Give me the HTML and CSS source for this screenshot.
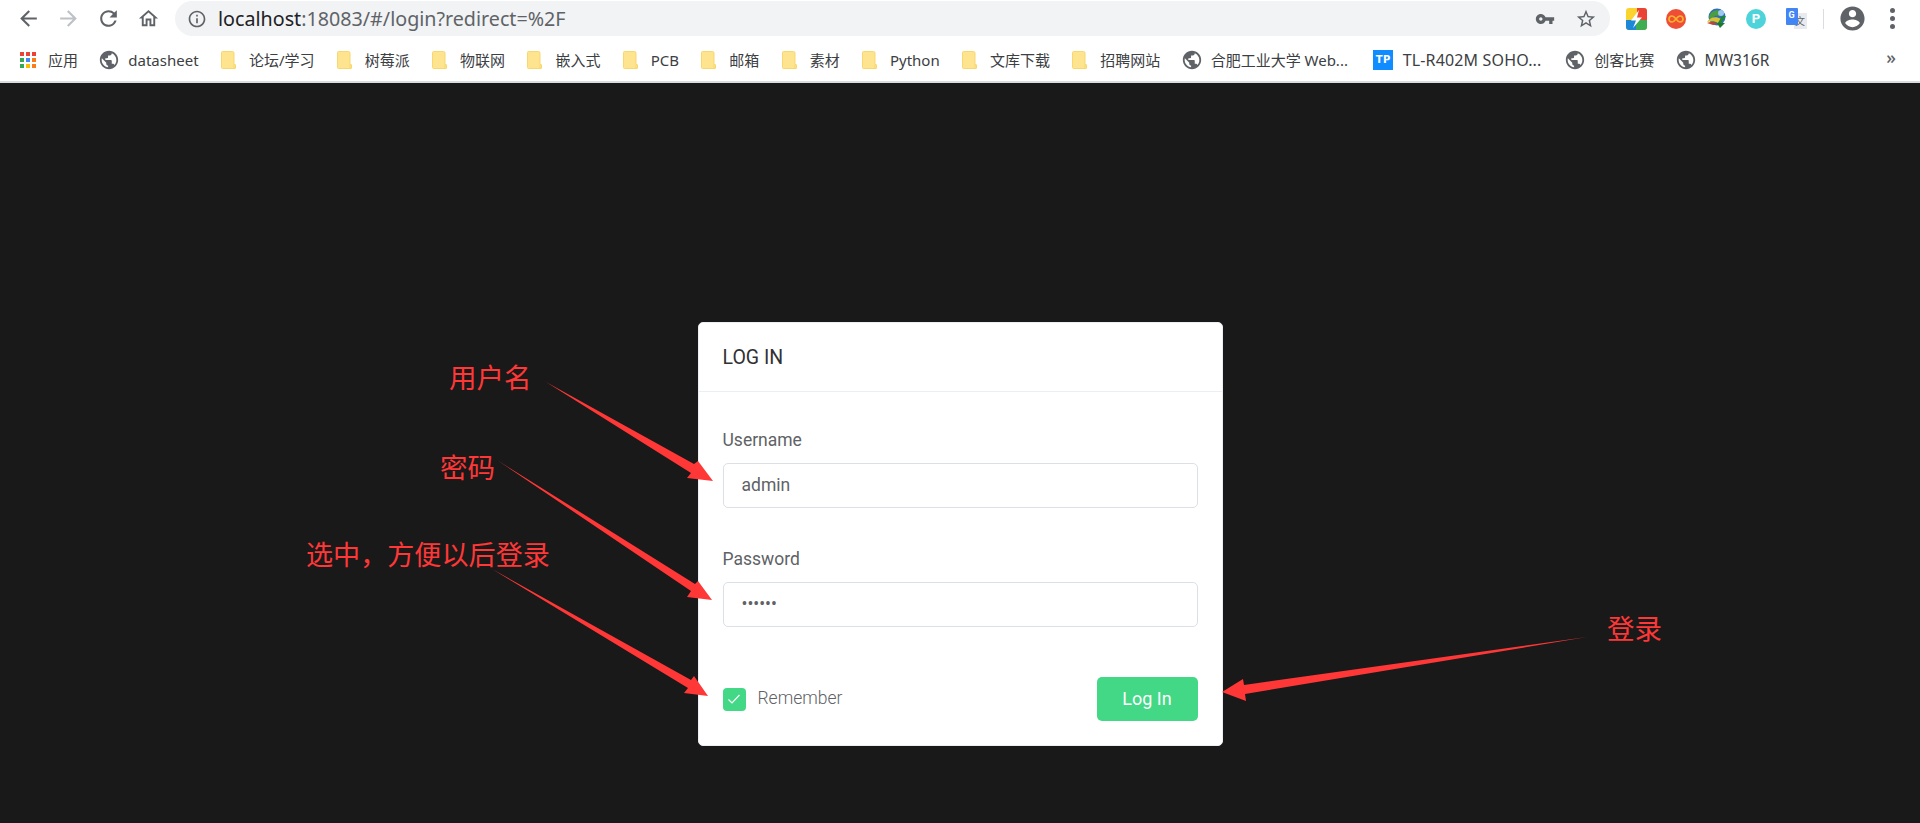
FILE: index.html
```html
<!DOCTYPE html>
<html lang="en">
<head>
    <meta charset="UTF-8">
    <title>Dashboard</title>
    <link rel="stylesheet" href="styles.css">
</head>
<body>
    <!-- shared icons -->
    <svg class="defs" width="0" height="0">
        <symbol id="globe" viewBox="0 0 24 24"><path d="M12 2C6.48 2 2 6.48 2 12s4.48 10 10 10 10-4.48 10-10S17.52 2 12 2zm-1 17.93c-3.95-.49-7-3.85-7-7.93 0-.62.08-1.21.21-1.79L9 15v1c0 1.1.9 2 2 2v1.93zm6.9-2.54c-.26-.81-1-1.39-1.9-1.39h-1v-3c0-.55-.45-1-1-1H8v-2h2c.55 0 1-.45 1-1V7h2c1.1 0 2-.9 2-2v-.41c2.93 1.19 5 4.06 5 7.41 0 2.08-.8 3.97-2.1 5.39z"/></symbol>
        <symbol id="folder" viewBox="0 0 15 18"><path d="M1.5.5h10a1.500 1.500 0 0 1 1.500 1.500v11.500h1a.5.5 0 0 1 .5.5v3a.5.5 0 0 1-.5.5H1.500a1 1 0 0 1-1-1V1.500a1 1 0 0 1 1-1z" fill="#fee48f" stroke="#f8d76e"/><path d="M13 14v3.500" stroke="#f8d76e" fill="none"/></symbol>
    </svg>

    <header class="chrome">
        <div class="toolbar">
            <button class="nav-btn"><svg class="icon-nav" viewBox="0 0 24 24"><path d="M20 11H7.830l5.590-5.590L12 4l-8 8 8 8 1.410-1.410L7.830 13H20v-2z"/></svg></button>
            <button class="nav-btn nav-off"><svg class="icon-nav" viewBox="0 0 24 24"><path d="M4 11h12.170l-5.590-5.590L12 4l8 8-8 8-1.410-1.410L16.170 13H4v-2z"/></svg></button>
            <button class="nav-btn"><svg class="icon-nav" viewBox="0 0 24 24"><path d="M17.650 6.350A7.958 7.958 0 0 0 12 4c-4.420 0-7.990 3.580-7.990 8s3.570 8 7.990 8c3.730 0 6.840-2.550 7.730-6h-2.080A5.990 5.990 0 0 1 12 18c-3.310 0-6-2.690-6-6s2.690-6 6-6c1.660 0 3.140.69 4.220 1.780L13 11h7V4l-2.350 2.350z"/></svg></button>
            <button class="nav-btn"><svg class="icon-home" viewBox="0 0 24 24"><path d="M12 5.690l5 4.500V18h-2v-6H9v6H7v-7.810l5-4.500M12 3L2 12h3v8h6v-6h2v6h6v-8h3L12 3z"/></svg></button>

            <div class="omnibox">
                <svg class="icon-info" viewBox="0 0 24 24"><path d="M11 7h2v2h-2zm0 4h2v6h-2zm1-9C6.480 2 2 6.480 2 12s4.480 10 10 10 10-4.480 10-10S17.520 2 12 2zm0 18c-4.410 0-8-3.590-8-8s3.590-8 8-8 8 3.590 8 8-3.590 8-8 8z"/></svg>
                <span class="url"><span class="url-host">localhost</span>:18083/#/login?redirect=%2F</span>
                <svg class="icon-key" viewBox="0 0 24 24"><path d="M12.650 10C11.830 7.670 9.610 6 7 6c-3.310 0-6 2.690-6 6s2.690 6 6 6c2.610 0 4.830-1.670 5.650-4H17v4h4v-4h2v-4H12.650zM7 14c-1.100 0-2-.9-2-2s.9-2 2-2 2 .9 2 2-.9 2-2 2z"/></svg>
                <svg class="icon-star" viewBox="0 0 24 24"><path d="M22 9.240l-7.190-.62L12 2 9.190 8.630 2 9.240l5.460 4.730L5.820 21 12 17.270 18.180 21l-1.630-7.030L22 9.240zM12 15.400l-3.760 2.270 1-4.280-3.320-2.880 4.380-.38L12 6.100l1.710 4.040 4.380.38-3.320 2.880 1 4.280L12 15.400z"/></svg>
            </div>

            <div class="extensions">
                <div class="ext">
                    <svg width="21" height="22" viewBox="0 0 21 22">
                        <rect width="21" height="22" rx="3" fill="#fbd32e"/>
                        <path d="M11 0h7a3 3 0 0 1 3 3v9H11z" fill="#ea4335"/>
                        <path d="M0 12h10v10H3a3 3 0 0 1-3-3z" fill="#1e88d8"/>
                        <path d="M10 12h11v7a3 3 0 0 1-3 3h-8z" fill="#3fae52"/>
                        <path d="M13 2L5 12.500h5L7 20l9-10.500h-5z" fill="#fff"/>
                    </svg>
                </div>
                <div class="ext">
                    <svg width="20" height="20" viewBox="0 0 20 20">
                        <circle cx="10" cy="10" r="10" fill="#ee4e36"/>
                        <path d="M10 10c-1.500-2-2.500-3-4-3a3 3 0 0 0 0 6c1.500 0 2.500-1 4-3s2.500-3 4-3a3 3 0 0 1 0 6c-1.500 0-2.500-1-4-3z" fill="none" stroke="#fbb42a" stroke-width="1.600"/>
                    </svg>
                </div>
                <div class="ext">
                    <svg width="21" height="21" viewBox="0 0 21 21">
                        <circle cx="11" cy="9" r="8.500" fill="#2f6fb5"/>
                        <path d="M3 10a8 8 0 0 1 13-6l-2 4a6 6 0 0 0-8 3z" fill="#4b9e3f"/>
                        <path d="M1 14c3-5 9-6 14-3l-3 4c-3-2-7-2-11-1z" fill="#d9c22e"/>
                        <path d="M1 15c4-2 8-1 11 1l-5 1z" fill="#c2452f"/>
                        <path d="M16 8h4l-6 8h-5l3-1z" fill="#1d8a32"/>
                        <path d="M11 15h8l-5 5z" fill="#1d7a2c"/>
                        <circle cx="15" cy="5" r="3" fill="#9cc8ef"/>
                    </svg>
                </div>
                <div class="ext"><span class="ext-p">P</span></div>
                <div class="ext">
                    <div class="translate">
                        <span class="translate-back">文</span>
                        <span class="translate-front">G</span>
                    </div>
                </div>
            </div>

            <div class="toolbar-sep"></div>
            <button class="nav-btn"><svg class="icon-avatar" viewBox="0 0 24 24"><path d="M12 2C6.480 2 2 6.480 2 12s4.480 10 10 10 10-4.480 10-10S17.520 2 12 2zm0 3c1.660 0 3 1.340 3 3s-1.340 3-3 3-3-1.340-3-3 1.340-3 3-3zm0 14.200c-2.500 0-4.710-1.280-6-3.220.03-1.990 4-3.080 6-3.080 1.990 0 5.970 1.090 6 3.080-1.290 1.940-3.500 3.220-6 3.220z"/></svg></button>
            <button class="nav-btn menu-btn"><span class="menu-dots"><i></i><i></i><i></i></span></button>
        </div>

        <nav class="bookmarks">
            <a class="bm">
                <span class="apps-grid">
                    <i class="c-red"></i><i class="c-red"></i><i class="c-red"></i>
                    <i class="c-green"></i><i class="c-blue"></i><i class="c-orange"></i>
                    <i class="c-green"></i><i class="c-yellow"></i><i class="c-orange"></i>
                </span>
                <span>应用</span>
            </a>
            <a class="bm"><svg class="bm-globe"><use href="#globe"/></svg><span>datasheet</span></a>
            <a class="bm"><svg class="bm-folder"><use href="#folder"/></svg><span>论坛/学习</span></a>
            <a class="bm"><svg class="bm-folder"><use href="#folder"/></svg><span>树莓派</span></a>
            <a class="bm"><svg class="bm-folder"><use href="#folder"/></svg><span>物联网</span></a>
            <a class="bm"><svg class="bm-folder"><use href="#folder"/></svg><span>嵌入式</span></a>
            <a class="bm"><svg class="bm-folder"><use href="#folder"/></svg><span>PCB</span></a>
            <a class="bm"><svg class="bm-folder"><use href="#folder"/></svg><span>邮箱</span></a>
            <a class="bm"><svg class="bm-folder"><use href="#folder"/></svg><span>素材</span></a>
            <a class="bm"><svg class="bm-folder"><use href="#folder"/></svg><span>Python</span></a>
            <a class="bm"><svg class="bm-folder"><use href="#folder"/></svg><span>文库下载</span></a>
            <a class="bm"><svg class="bm-folder"><use href="#folder"/></svg><span>招聘网站</span></a>
            <a class="bm"><svg class="bm-globe"><use href="#globe"/></svg><span>合肥工业大学 Web...</span></a>
            <a class="bm"><span class="tp-logo">TP</span><span class="bm-wide">TL-R402M SOHO...</span></a>
            <a class="bm"><svg class="bm-globe"><use href="#globe"/></svg><span>创客比赛</span></a>
            <a class="bm"><svg class="bm-globe"><use href="#globe"/></svg><span class="bm-spaced">MW316R</span></a>
            <span class="bm-more">»</span>
        </nav>
    </header>

    <main class="stage">
        <form class="login-card">
            <div class="card-header">LOG IN</div>
            <div class="card-body">
                <div class="form-item">
                    <label class="form-label">Username</label>
                    <input class="form-input" type="text" value="admin">
                </div>
                <div class="form-item">
                    <label class="form-label">Password</label>
                    <input class="form-input" type="password" value="public">
                </div>
                <div class="form-footer">
                    <label class="remember">
                        <span class="checkbox">
                            <svg width="14" height="12" viewBox="0 0 14 12"><path d="M1.500 6.500l3.500 3.500 7.500-8" fill="none" stroke="#fff" stroke-width="1.200"/></svg>
                        </span>
                        <span class="remember-text">Remember</span>
                    </label>
                    <button class="login-btn" type="button">Log In</button>
                </div>
            </div>
        </form>

        <!-- red annotations drawn over the screenshot -->
        <svg class="arrows" width="1920" height="823" viewBox="0 0 1920 823">
            <path d="M546 382L694 464L698 461L713 481L687 478L691 473z"/>
            <path d="M497 460L695 584L698 581L712 600L687 597L691 591z"/>
            <path d="M492 569L691 680L694 676L708 696L684 693L688 688z"/>
            <path d="M1587 637L1244 685L1243 679L1222 692L1246 701L1245 694z"/>
        </svg>
        <span class="note note-user">用户名</span>
        <span class="note note-pass">密码</span>
        <span class="note note-keep">选中，方便以后登录</span>
        <span class="note note-login">登录</span>
    </main>
</body>
</html>
```

FILE: styles.css
```css
* {
    box-sizing: border-box;
}
html, body {
    height: 100%;
}
body {
    margin: 0;
    overflow: hidden;
    display: flex;
    flex-direction: column;
    background-color: #191919;
    font-family: Roboto, "Noto Sans CJK SC", sans-serif;
}
.defs {
    position: absolute;
}

/* browser chrome */
.chrome {
    background-color: white;
    border-bottom: 2px solid #dadce0;
    font-family: "Noto Sans", "Noto Sans CJK SC", sans-serif;
}
.toolbar {
    display: flex;
    align-items: flex-start;
    height: 40px;
    padding: 1px 0 0 8px;
}
.nav-btn {
    width: 40px;
    height: 35px;
    padding: 0;
    border: none;
    background: none;
    display: flex;
    align-items: center;
    justify-content: center;
    fill: #5f6368;
}
.nav-off {
    fill: #bdc1c6;
}
.icon-nav {
    width: 25px;
    height: 25px;
}
.icon-home {
    width: 23px;
    height: 23px;
}
.omnibox {
    width: 1435px;
    height: 35px;
    margin-left: 7px;
    padding: 0 13px 0 12px;
    border-radius: 18px;
    background-color: #f1f3f4;
    display: flex;
    align-items: center;
    fill: #5f6368;
}
.icon-info {
    width: 20px;
    height: 20px;
}
.url {
    flex: 1;
    margin-left: 11px;
    font-size: 19.700px;
    color: #5f6368;
    white-space: nowrap;
}
.url-host {
    color: #202124;
}
.icon-key {
    width: 20px;
    height: 20px;
}
.icon-star {
    width: 22px;
    height: 22px;
    margin-left: 20px;
}
.extensions {
    display: flex;
    margin-left: 6px;
}
.ext {
    width: 40px;
    height: 35px;
    display: flex;
    align-items: center;
    justify-content: center;
}
.ext-p {
    width: 20px;
    height: 20px;
    border-radius: 50%;
    background-color: #4dd3da;
    color: white;
    font: bold 13px/20px Roboto, sans-serif;
    text-align: center;
}
.translate {
    position: relative;
    width: 21px;
    height: 22px;
}
.translate-back {
    position: absolute;
    right: 0;
    bottom: 1px;
    width: 13px;
    height: 16px;
    background-color: #e8eaed;
    color: #5f6368;
    font-size: 10px;
    line-height: 16px;
    text-align: center;
}
.translate-front {
    position: absolute;
    left: 0;
    top: 0;
    width: 12px;
    height: 17px;
    border-radius: 1px;
    background-color: #4285f4;
    color: white;
    font: bold 9px/15px Roboto, sans-serif;
    text-align: center;
}
.toolbar-sep {
    width: 1px;
    height: 20px;
    margin: 8px 8px 0 7px;
    background-color: #dadce0;
}
.icon-avatar {
    width: 29px;
    height: 29px;
}
.menu-dots {
    display: flex;
    flex-direction: column;
    gap: 3px;
}
.menu-dots i {
    width: 5px;
    height: 5px;
    border-radius: 50%;
    background-color: #5f6368;
}

/* bookmarks bar */
.bookmarks {
    display: flex;
    align-items: center;
    gap: 22.300px;
    height: 41px;
    padding: 0 0 2px 20px;
    font-size: 15px;
    color: #3c4043;
}
.bm {
    display: flex;
    align-items: center;
    gap: 13px;
    white-space: nowrap;
}
.bm-wide {
    font-size: 16px;
    letter-spacing: 0.150px;
    margin-right: 2.500px;
}
.bm-spaced {
    font-size: 15.500px;
}
.apps-grid {
    display: grid;
    grid-template-columns: repeat(3, 4px);
    gap: 2px;
    margin-right: -1px;
}
.apps-grid i {
    height: 4px;
}
.c-red { background-color: #ea4335; }
.c-green { background-color: #34a853; }
.c-blue { background-color: #4285f4; }
.c-orange { background-color: #fa7b17; }
.c-yellow { background-color: #fbbc04; }
.bm-globe {
    width: 22px;
    height: 22px;
    margin: 0 -5px 0 -2px;
    fill: #5f6368;
}
.bm-folder {
    width: 15px;
    height: 18px;
}
.tp-logo {
    width: 20px;
    height: 20px;
    margin-right: -3.500px;
    margin-left: 3px;
    background-color: #0f8cff;
    color: white;
    font: bold 10px/20px "DejaVu Sans", sans-serif;
    letter-spacing: 0.500px;
    text-align: center;
}
.bm-more {
    margin-left: auto;
    margin-right: 24px;
    padding-bottom: 5px;
    font-size: 18px;
    font-weight: 500;
    color: #5f6368;
}

/* login page */
.stage {
    flex: 1;
    display: flex;
    justify-content: center;
    align-items: flex-start;
    padding-top: 239px;
}
.login-card {
    width: 525px;
    height: 424px;
    border-radius: 5px;
    background-color: white;
    border: 1px solid #ebeef5;
}
.card-header {
    height: 69px;
    padding: 0 24px;
    border-bottom: 1px solid #ebeef5;
    font-size: 19.500px;
    line-height: 70px;
    color: #303133;
}
.card-body {
    padding: 35px 24px 0;
}
.form-item {
    height: 119px;
}
.form-label {
    display: block;
    margin-bottom: 10px;
    font-size: 17.500px;
    line-height: 26px;
    color: #606266;
}
.form-input {
    display: block;
    width: 100%;
    height: 45px;
    padding: 0 18px 1px;
    border: 1px solid #dcdfe6;
    border-radius: 5px;
    font-family: Roboto, sans-serif;
    font-size: 17.500px;
    color: #606266;
    outline: none;
}
.form-footer {
    display: flex;
    align-items: center;
    justify-content: space-between;
    margin-top: 12px;
}
.remember {
    display: flex;
    align-items: center;
    gap: 12px;
    font-size: 17.500px;
    font-weight: 300;
    color: #606266;
}
.remember-text {
    margin-top: -2px;
}
.checkbox {
    width: 23px;
    height: 23px;
    border-radius: 4px;
    background-color: #42d885;
    display: flex;
    align-items: center;
    justify-content: center;
}
.login-btn {
    width: 101px;
    height: 44px;
    padding: 0 0 2px;
    border: none;
    border-radius: 5px;
    background-color: #42d885;
    color: white;
    font-family: Roboto, sans-serif;
    font-size: 18px;
    font-weight: 400;
}

/* annotations */
.arrows {
    position: absolute;
    left: 0;
    top: 0;
    fill: #ff3737;
    pointer-events: none;
}
.note {
    position: absolute;
    font-family: "Noto Sans CJK SC", sans-serif;
    font-size: 27.500px;
    line-height: 36px;
    color: #ff3737;
    white-space: nowrap;
}
.note-user { left: 449px; top: 358px; }
.note-pass { left: 440px; top: 448px; }
.note-keep { left: 306px; top: 536px; font-size: 27.100px; }
.note-login { left: 1607px; top: 609px; }
```
